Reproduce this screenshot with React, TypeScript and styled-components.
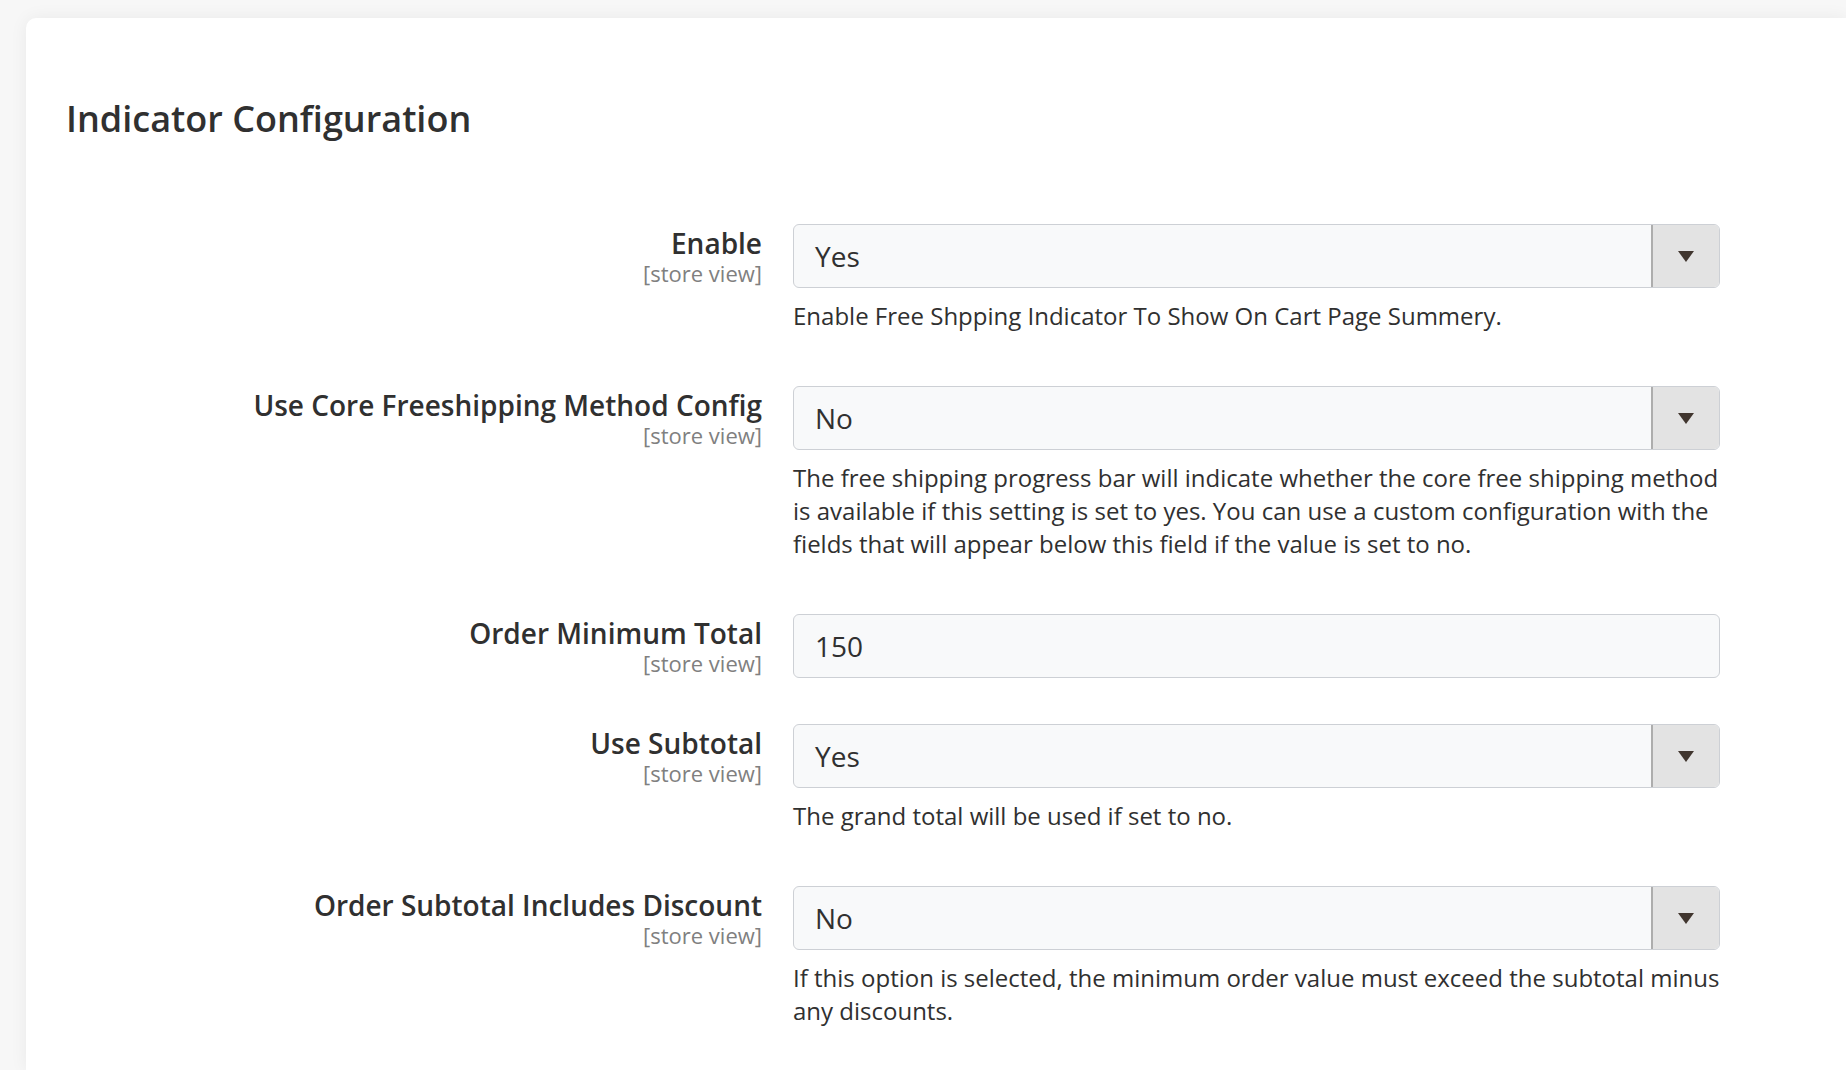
import React from "react";
import styled, { createGlobalStyle } from "styled-components";

const GlobalStyle = createGlobalStyle`
  html, body {
    margin: 0;
    padding: 0;
    background: #f7f7f7;
  }
  body {
    font-family: "Open Sans", "Liberation Sans", sans-serif;
    color: #303030;
    overflow: hidden;
  }
  * { box-sizing: border-box; }
`;

const Page = styled.div`
  padding: 18px 0 0 26px;
  height: 1070px;
`;

const Card = styled.section`
  background: #ffffff;
  border-radius: 10px 0 0 0;
  box-shadow: 0 0 18px rgba(0, 0, 0, 0.06);
  padding: 81px 40px 0 40px;
  min-height: 1052px;
`;

const Title = styled.h2`
  margin: 0 0 85px 0;
  font-size: 36px;
  line-height: 40px;
  font-weight: 600;
  color: #303030;
`;

const Fields = styled.div`
  display: flex;
  flex-direction: column;
  gap: 46px;
`;

const Field = styled.div`
  display: grid;
  grid-template-columns: 696px 927px;
  column-gap: 31px;
  align-items: start;
`;

const LabelCol = styled.div`
  text-align: right;
  display: flex;
  flex-direction: column;
`;

const Label = styled.label`
  font-size: 28px;
  line-height: 38px;
  font-weight: 600;
  color: #303030;
`;

const Scope = styled.span`
  font-size: 22px;
  line-height: 22px;
  color: #808080;
`;

const Control = styled.div`
  display: flex;
  flex-direction: column;
`;

const SelectBox = styled.div`
  display: flex;
  height: 64px;
  border: 1px solid #cdd0d5;
  border-radius: 6px;
  background: #f8f9fa;
  overflow: hidden;
`;

const SelectValue = styled.div`
  flex: 1;
  display: flex;
  align-items: center;
  padding-left: 21px;
  font-size: 28px;
  color: #303030;
`;

const ArrowCell = styled.div`
  width: 68px;
  flex: 0 0 68px;
  background: #e3e3e3;
  border-left: 2px solid #adadad;
  display: flex;
  align-items: center;
  justify-content: center;
`;

const TextInput = styled.input`
  height: 64px;
  border: 1px solid #cdd0d5;
  border-radius: 6px;
  background: #f8f9fa;
  padding: 0 0 0 21px;
  font-family: "Open Sans", "Liberation Sans", sans-serif;
  font-size: 28px;
  color: #303030;
  outline: none;
  width: 100%;
`;

const Note = styled.div`
  margin-top: 11px;
  margin-bottom: 8px;
  font-size: 24px;
  line-height: 33px;
  color: #303030;
`;

const Arrow = () => (
  <svg width="16" height="11" viewBox="0 0 16 11" aria-hidden="true">
    <polygon points="0,0 16,0 8,11" fill="#41362f" />
  </svg>
);

type FieldDef = {
  label: string;
  kind: "select" | "input";
  value: string;
  note?: string;
};

const fields: FieldDef[] = [
  {
    label: "Enable",
    kind: "select",
    value: "Yes",
    note: "Enable Free Shpping Indicator To Show On Cart Page Summery.",
  },
  {
    label: "Use Core Freeshipping Method Config",
    kind: "select",
    value: "No",
    note:
      "The free shipping progress bar will indicate whether the core free shipping method is available if this setting is set to yes. You can use a custom configuration with the fields that will appear below this field if the value is set to no.",
  },
  { label: "Order Minimum Total", kind: "input", value: "150" },
  {
    label: "Use Subtotal",
    kind: "select",
    value: "Yes",
    note: "The grand total will be used if set to no.",
  },
  {
    label: "Order Subtotal Includes Discount",
    kind: "select",
    value: "No",
    note:
      "If this option is selected, the minimum order value must exceed the subtotal minus any discounts.",
  },
];

export default function App() {
  return (
    <>
      <GlobalStyle />
      <Page>
        <Card>
          <Title>Indicator Configuration</Title>
          <Fields>
            {fields.map((f) => (
              <Field key={f.label}>
                <LabelCol>
                  <Label>{f.label}</Label>
                  <Scope>[store view]</Scope>
                </LabelCol>
                <Control>
                  {f.kind === "select" ? (
                    <SelectBox>
                      <SelectValue>{f.value}</SelectValue>
                      <ArrowCell>
                        <Arrow />
                      </ArrowCell>
                    </SelectBox>
                  ) : (
                    <TextInput defaultValue={f.value} />
                  )}
                  {f.note && <Note>{f.note}</Note>}
                </Control>
              </Field>
            ))}
          </Fields>
        </Card>
      </Page>
    </>
  );
}
